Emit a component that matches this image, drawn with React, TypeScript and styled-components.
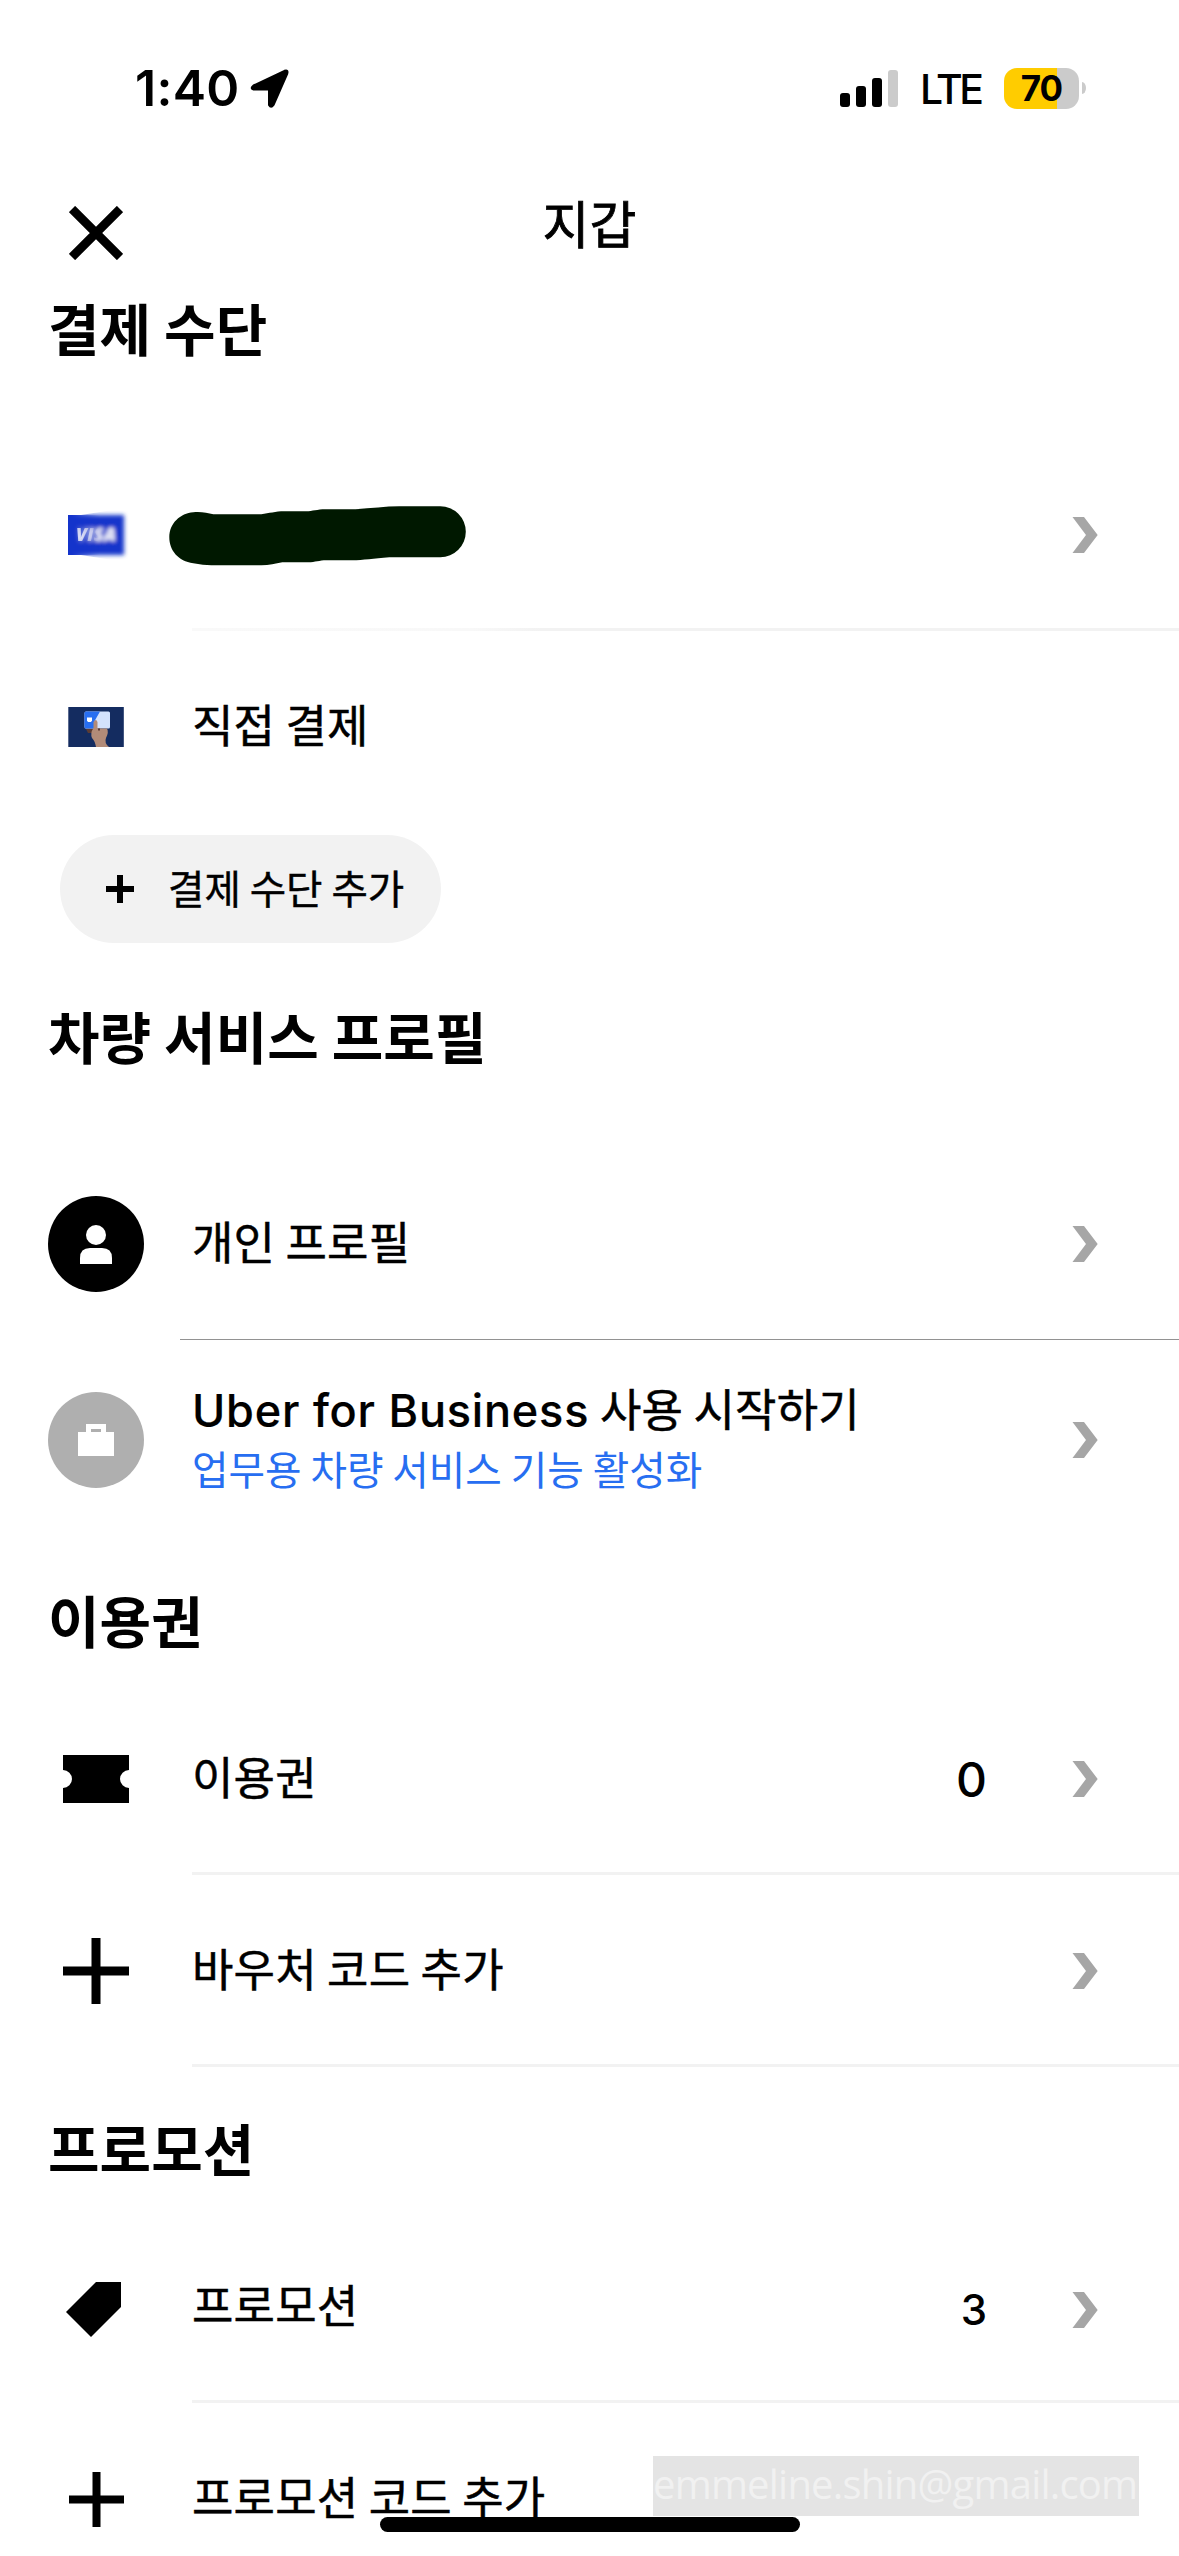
import React from "react";
import styled, { createGlobalStyle } from "styled-components";

const latin = `Inter, "Noto Sans CJK KR", sans-serif`;
const korean = `"Noto Sans CJK KR", sans-serif`;

const GlobalStyle = createGlobalStyle`
  * { box-sizing: border-box; }
  html, body { margin: 0; padding: 0; background: #fff; }
  body { overflow: hidden; }
`;

const Screen = styled.div`
  position: relative;
  display: flex;
  flex-direction: column;
  width: 1179px;
  height: 2556px;
  overflow: hidden;
  background: #fff;
  color: #000;
  font-family: ${korean};
`;

const StatusBar = styled.div`
  flex: none;
  display: flex;
  align-items: center;
  justify-content: space-between;
  height: 176px;
  padding: 0 93px 0 135px;
  font-family: ${latin};
`;

const StatusGroup = styled.div<{ $gap: number }>`
  display: flex;
  align-items: center;
  gap: ${(p) => p.$gap}px;
`;

const Clock = styled.span`
  width: 103px;
  font-size: 50px;
  line-height: 60px;
  font-weight: 600;
  letter-spacing: 0.3px;
  white-space: nowrap;
`;

const Network = styled.span`
  width: 61px;
  margin: 1px 23px 0 22px;
  font-size: 41px;
  line-height: 50px;
  font-weight: 500;
  letter-spacing: -3.4px;
  white-space: nowrap;
`;

const Battery = styled.div`
  display: flex;
  align-items: center;
  justify-content: center;
  width: 75px;
  height: 41px;
  border-radius: 13px;
  background: linear-gradient(90deg, #ffcc00 53px, #cbcbcb 53px);
  font-size: 35px;
  line-height: 41px;
  font-weight: 700;
  letter-spacing: -1px;
`;

const BatteryTip = styled.div`
  width: 4px;
  height: 12px;
  margin-left: 3px;
  border-radius: 0 4px 4px 0 / 0 6px 6px 0;
  background: #cbcbcb;
`;

const NavBar = styled.header`
  flex: none;
  display: grid;
  grid-template-columns: 192px 1fr 192px;
  align-items: center;
  height: 109px;
`;

const CloseButton = styled.button`
  display: flex;
  width: 54px;
  margin: 5px 0 0 69px;
  padding: 0;
  border: 0;
  background: none;
`;

const NavTitle = styled.h1`
  margin: 0 0 17px;
  font-size: 51px;
  line-height: 72px;
  font-weight: 400;
  -webkit-text-stroke: 0.8px #000;
  text-align: center;
`;

const Heading = styled.h2<{ $top?: number; $bottom: number }>`
  flex: none;
  margin: ${(p) => p.$top ?? 0}px 0 ${(p) => p.$bottom}px;
  padding-left: 48px;
  font-size: 56px;
  line-height: 84px;
  font-weight: 700;
  letter-spacing: 0.1px;
  white-space: pre;
`;

const Row = styled.div<{ $height?: number }>`
  flex: none;
  display: grid;
  grid-template-columns: 192px 1fr auto 192px;
  height: ${(p) => p.$height ?? 192}px;
`;

const Lead = styled.div`
  display: flex;
  align-items: center;
  justify-content: center;
  width: 192px;
`;

const Labels = styled.div<{ $lift?: number }>`
  display: flex;
  flex-direction: column;
  justify-content: center;
  padding-bottom: ${(p) => (p.$lift ?? 3) * 2}px;
`;

const Label = styled.span`
  font-size: 45px;
  line-height: 64px;
  font-weight: 400;
  letter-spacing: 0.2px;
  -webkit-text-stroke: 0.5px #000;
  white-space: nowrap;
`;

const LatinRun = styled.span`
  margin-right: -2px;
  font-family: ${latin};
  font-weight: 500;
  letter-spacing: 0.8px;
  -webkit-text-stroke: 0.2px #000;
`;

const SubLabel = styled.span`
  margin-top: -4px;
  font-size: 39.7px;
  line-height: 58px;
  font-weight: 400;
  color: #276ef1;
  white-space: nowrap;
`;

const Count = styled.span<{ $size: number; $drop?: number }>`
  align-self: center;
  padding-top: ${(p) => p.$drop ?? 0}px;
  font-family: ${latin};
  font-size: ${(p) => p.$size}px;
  line-height: 60px;
  font-weight: 500;
`;

const Trail = styled.div<{ $shift?: number }>`
  display: flex;
  align-items: center;
  padding: ${(p) => (p.$shift ?? 0) * 2}px 0 0 85px;
`;

const Divider = styled.hr<{ $kind?: "thin" | "fade" }>`
  flex: none;
  width: ${(p) => (p.$kind === "thin" ? 999 : 987)}px;
  height: ${(p) => (p.$kind === "thin" ? 1 : 3)}px;
  margin: ${(p) => (p.$kind === "thin" ? -1 : -3)}px 0 0 auto;
  border: 0;
  background: ${(p) =>
    p.$kind === "thin"
      ? "#929292"
      : p.$kind === "fade"
        ? "linear-gradient(90deg, #f9f9f9 0, #f8f8f8 280px, #f2f2f2 350px)"
        : "#f2f2f2"};
`;

const Avatar = styled.div<{ $color: string }>`
  display: flex;
  align-items: center;
  justify-content: center;
  width: 96px;
  height: 96px;
  border-radius: 50%;
  background: ${(p) => p.$color};
`;

const AddButton = styled.button`
  flex: none;
  display: flex;
  align-items: center;
  gap: 34px;
  width: 381px;
  height: 108px;
  margin: 12px 0 0 60px;
  padding: 0 0 0 46px;
  border: 0;
  border-radius: 54px;
  background: #f2f2f2;
  color: #000;
  font-family: ${korean};
  font-size: 39.6px;
  line-height: 60px;
  font-weight: 400;
  -webkit-text-stroke: 0.4px #000;
  white-space: nowrap;
`;

const ButtonText = styled.span`
  padding-bottom: 4px;
`;

const Watermark = styled.div`
  position: absolute;
  left: 653px;
  top: 2456px;
  width: 486px;
  height: 60px;
  padding-left: 0;
  background: #e4e4e4;
  color: #f1f1f1;
  font-family: "Open Sans", "Noto Sans", sans-serif;
  font-size: 40px;
  line-height: 55px;
  letter-spacing: -0.8px;
  white-space: nowrap;
`;

const HomeIndicator = styled.div`
  position: absolute;
  left: 380px;
  top: 2517px;
  width: 420px;
  height: 15px;
  border-radius: 8px;
  background: #000;
`;

const Chevron = () => (
  <svg width="26" height="36" viewBox="0 0 26 36">
    <path d="M0.500 0H12L25.700 18L12 36H0.500L14 18Z" fill="#a6a6a6" />
  </svg>
);

const Plus = ({ size, weight }: { size: number; weight: number }) => (
  <svg width={size} height={size} viewBox={`0 0 ${size} ${size}`}>
    <path
      d={`M${size / 2} 0V${size}M0 ${size / 2}H${size}`}
      stroke="#000"
      strokeWidth={weight}
    />
  </svg>
);

const VisaCard = () => (
  <svg width="66" height="52" viewBox="0 0 66 52" overflow="visible">
    <defs>
      <linearGradient id="sharp" x1="0" x2="1" y1="0" y2="0">
        <stop offset="0.15" stopColor="#fff" />
        <stop offset="0.6" stopColor="#000" />
      </linearGradient>
      <mask id="left" maskUnits="userSpaceOnUse" x="0" y="0" width="60" height="52">
        <rect x="0" y="0" width="60" height="52" fill="url(#sharp)" />
      </mask>
      <filter id="soft" x="-20%" y="-30%" width="140%" height="160%">
        <feGaussianBlur stdDeviation="1.9" />
      </filter>
      <clipPath id="edge">
        <path d="M5 6H18L68 -2V54L18 46H5Z" />
      </clipPath>
    </defs>
    <g clipPath="url(#edge)">
      <g filter="url(#soft)">
        <rect x="-4" y="6" width="65" height="40" fill="#1434cb" />
        <text x="13" y="32" fill="#fff" fontFamily="Open Sans, sans-serif" fontSize="18" fontWeight="800" fontStyle="italic" textLength="40">VISA</text>
      </g>
    </g>
    <g mask="url(#left)">
      <rect x="5" y="6" width="50" height="40" fill="#1434cb" />
      <text x="13" y="32" fill="#fff" fillOpacity="0.85" fontFamily="Open Sans, sans-serif" fontSize="18" fontWeight="800" fontStyle="italic" textLength="40">VISA</text>
    </g>
  </svg>
);

const HandCard = () => (
  <svg width="56" height="40" viewBox="0 0 56 40">
    <rect x="0.300" width="55.500" height="40" fill="#142c60" />
    <path d="M17 20H26V26H20Z" fill="#5c3c34" />
    <rect x="16.5" y="4.5" width="25.5" height="17" rx="1.5" fill="#d4e2fc" />
    <path d="M18 4.5H32L26 15V21.5H18Q16.500 21.500 16.500 20V6Q16.500 4.500 18 4.500Z" fill="#276ef1" />
    <path d="M19 10.500H24V13.500L23 15H20L19 13.500Z" fill="#fff" />
    <path d="M25.500 15Q28 11 29.500 15V21.500H39Q41 25 38 31Q36 36 41 40H28Q27 34 24 31Q22 26 25.500 21Z" fill="#b28b78" />
    <path d="M30 21.500H32V23.500H30Z" fill="#5c3c34" />
  </svg>
);

const RedactedNumber = () => (
  <svg width="302" height="64" viewBox="0 0 302 64" overflow="visible">
    <path
      d="M24 6C11 7 0 17 0 31C0 44 9 55 24 57Q34 59 42 59H92C100 59 106 57 113 56H139C146 56 150 54 157 54H183C194 54 204 52 220 51H271A25.500 25.500 0 0 0 271 0H230C216 0 202 2 186 3H156C148 3 143 5 137 5H115C106 5 100 7 92 8H44C38 7 32 5 24 6Z"
      transform="translate(-22.7 3.3)"
      fill="#001800"
    />
  </svg>
);

const App = () => (
  <>
    <GlobalStyle />
    <Screen>
      <StatusBar>
        <StatusGroup $gap={12}>
          <Clock>1:40</Clock>
          <svg width="39" height="39" viewBox="0 0 39 39">
            <path d="M3.500 16.500L34.500 1.800Q38.500 0.500 37.200 4.800L23.500 36Q21 39.500 19 36V20.500H3.500Q-0.200 19.500 3.500 16.500Z" fill="#000" stroke="#000" strokeWidth="2" strokeLinejoin="round" />
          </svg>
        </StatusGroup>
        <StatusGroup $gap={0}>
          <svg width="58" height="38" viewBox="0 0 58 38">
            <rect x="0" y="24" width="10" height="14" rx="3" />
            <rect x="16" y="17" width="10" height="21" rx="3" />
            <rect x="32" y="9" width="10" height="29" rx="3" />
            <rect x="48" y="1" width="10" height="37" rx="3" fill="#cbcbcb" />
          </svg>
          <Network>LTE</Network>
          <Battery>70</Battery>
          <BatteryTip />
        </StatusGroup>
      </StatusBar>

      <NavBar>
        <CloseButton aria-label="닫기">
          <svg width="54" height="54" viewBox="0 0 54 54">
            <path d="M3 3L51 51M51 3L3 51" stroke="#000" strokeWidth="8.800" />
          </svg>
        </CloseButton>
        <NavTitle>지갑</NavTitle>
      </NavBar>

      <Heading $bottom={70}>결제 수단</Heading>
      <Row>
        <Lead><VisaCard /></Lead>
        <Labels $lift={0}><RedactedNumber /></Labels>
        <span />
        <Trail><Chevron /></Trail>
      </Row>
      <Divider $kind="fade" />
      <Row>
        <Lead><HandCard /></Lead>
        <Labels><Label>직접 결제</Label></Labels>
      </Row>
      <AddButton>
        <Plus size={28} weight={6} />
        <ButtonText>결제 수단 추가</ButtonText>
      </AddButton>

      <Heading $top={50} $bottom={71}>차량 서비스 프로필</Heading>
      <Row>
        <Lead>
          <Avatar $color="#000">
            <svg width="32" height="39" viewBox="0 0 32 39">
              <circle cx="16" cy="10" r="10" fill="#fff" />
              <path d="M0 39V33Q0 23 10 23H22Q32 23 32 33V39Z" fill="#fff" />
            </svg>
          </Avatar>
        </Lead>
        <Labels><Label>개인 프로필</Label></Labels>
        <span />
        <Trail><Chevron /></Trail>
      </Row>
      <Divider $kind="thin" />
      <Row $height={200}>
        <Lead>
          <Avatar $color="#afafaf">
            <svg width="36" height="32" viewBox="0 0 36 32">
              <path fillRule="evenodd" d="M8 0H28V8H36V32H0V8H8ZM13 5V8H23V5Z" fill="#fff" />
            </svg>
          </Avatar>
        </Lead>
        <Labels $lift={4}>
          <Label><LatinRun>Uber for Business </LatinRun>사용 시작하기</Label>
          <SubLabel>업무용 차량 서비스 기능 활성화</SubLabel>
        </Labels>
        <span />
        <Trail><Chevron /></Trail>
      </Row>

      <Heading $top={37} $bottom={22}>이용권</Heading>
      <Row>
        <Lead>
          <svg width="66" height="48" viewBox="0 0 66 48">
            <path d="M0 0H66V15A9 9 0 0 0 66 33V48H0V33A9 9 0 0 0 0 15Z" />
          </svg>
        </Lead>
        <Labels><Label>이용권</Label></Labels>
        <Count $size={48} $drop={1}>0</Count>
        <Trail><Chevron /></Trail>
      </Row>
      <Divider />
      <Row>
        <Lead><Plus size={66} weight={9} /></Lead>
        <Labels><Label>바우처 코드 추가</Label></Labels>
        <span />
        <Trail><Chevron /></Trail>
      </Row>
      <Divider />

      <Heading $top={38} $bottom={22}>프로모션</Heading>
      <Row>
        <Lead>
          <svg width="60" height="60" viewBox="0 0 60 60">
            <path d="M30 5H55V30L25 60L0 35Z" />
          </svg>
        </Lead>
        <Labels><Label>프로모션</Label></Labels>
        <Count $size={42} $drop={5}>3</Count>
        <Trail $shift={3}><Chevron /></Trail>
      </Row>
      <Divider />
      <Row>
        <Lead><Plus size={55} weight={8} /></Lead>
        <Labels><Label>프로모션 코드 추가</Label></Labels>
      </Row>

      <Watermark>emmeline.shin@gmail.com</Watermark>
      <HomeIndicator />
    </Screen>
  </>
);

export default App;
